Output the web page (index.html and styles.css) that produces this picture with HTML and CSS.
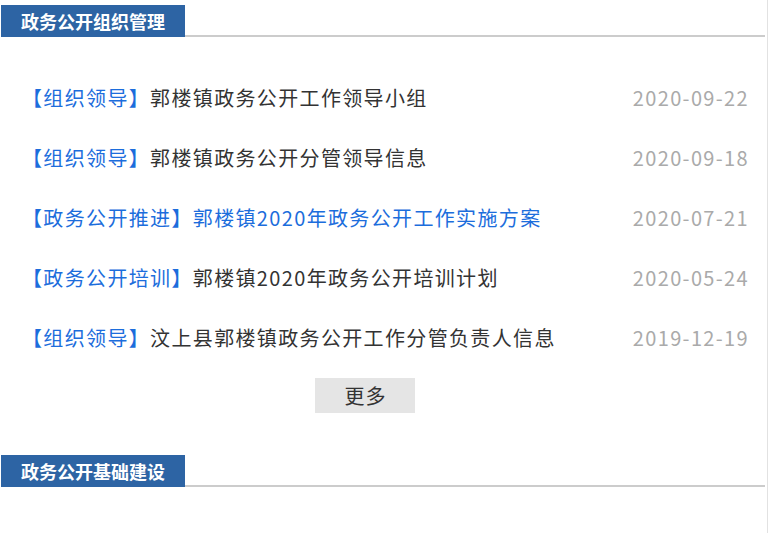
FILE: index.html
```html
<!DOCTYPE html>
<html lang="zh-CN">
<head>
    <meta charset="UTF-8">
    <title>政务公开</title>
    <link rel="stylesheet" href="styles.css">
</head>
<body>

    <div class="page">
        <!-- 组织管理 -->
        <div class="section-head">
            <span class="section-title">政务公开组织管理</span>
        </div>

        <ul class="news-list">
            <li class="news-item">
                <a class="news-link" href="#"><span class="tag">【组织领导】</span>郭楼镇政务公开工作领导小组</a>
                <span class="news-date">2020-09-22</span>
            </li>
            <li class="news-item">
                <a class="news-link" href="#"><span class="tag">【组织领导】</span>郭楼镇政务公开分管领导信息</a>
                <span class="news-date">2020-09-18</span>
            </li>
            <li class="news-item">
                <a class="news-link active" href="#"><span class="tag">【政务公开推进】</span>郭楼镇2020年政务公开工作实施方案</a>
                <span class="news-date">2020-07-21</span>
            </li>
            <li class="news-item">
                <a class="news-link" href="#"><span class="tag">【政务公开培训】</span>郭楼镇2020年政务公开培训计划</a>
                <span class="news-date">2020-05-24</span>
            </li>
            <li class="news-item">
                <a class="news-link" href="#"><span class="tag">【组织领导】</span>汶上县郭楼镇政务公开工作分管负责人信息</a>
                <span class="news-date">2019-12-19</span>
            </li>
        </ul>

        <a class="more-btn" href="#">更多</a>

        <!-- 基础建设 -->
        <div class="section-head">
            <span class="section-title">政务公开基础建设</span>
        </div>
    </div>

</body>
</html>
```

FILE: styles.css
```css
/* Page frame */
body {
    margin: 0;
    background: #fff;
    font-family: "Noto Sans CJK SC", "Noto Sans", sans-serif;
    color: #333;
}

.page {
    width: 768px;
    height: 533px;
    border-right: 1px solid #e2e2e2;
    padding: 5px 2px 0 1px;
    box-sizing: border-box;
}

/* Section header with blue tab */
.section-head {
    display: flex;
    align-items: flex-end;
    height: 32px;
    border-bottom: 2px solid #cccccc;
    box-sizing: border-box;
}

.section-title {
    display: block;
    height: 32px;
    margin-bottom: -2px;
    padding: 0 20px;
    background: #2d64a4;
    color: #fff;
    font-size: 18px;
    font-weight: bold;
    line-height: 32px;
}

/* News list */
.news-list {
    list-style: none;
    margin: 31px 0 0;
    padding: 0 16px 0 21px;
}

.news-item {
    display: flex;
    justify-content: space-between;
    height: 60px;
    line-height: 60px;
    font-size: 20px;
    letter-spacing: 1.35px;
}

.news-link {
    color: #333;
    text-decoration: none;
}

.tag {
    color: #1c6ddc;
}

.news-link.active {
    color: #1c6ddc;
}

.news-date {
    color: #aaaaaa;
}

/* More button */
.more-btn {
    display: block;
    width: 100px;
    height: 35px;
    margin: 10px 0 42px 314px;
    padding-left: 1px;
    box-sizing: border-box;
    background: #e5e5e5;
    color: #333;
    font-size: 20px;
    letter-spacing: 1px;
    line-height: 35px;
    text-align: center;
    text-decoration: none;
}
```
